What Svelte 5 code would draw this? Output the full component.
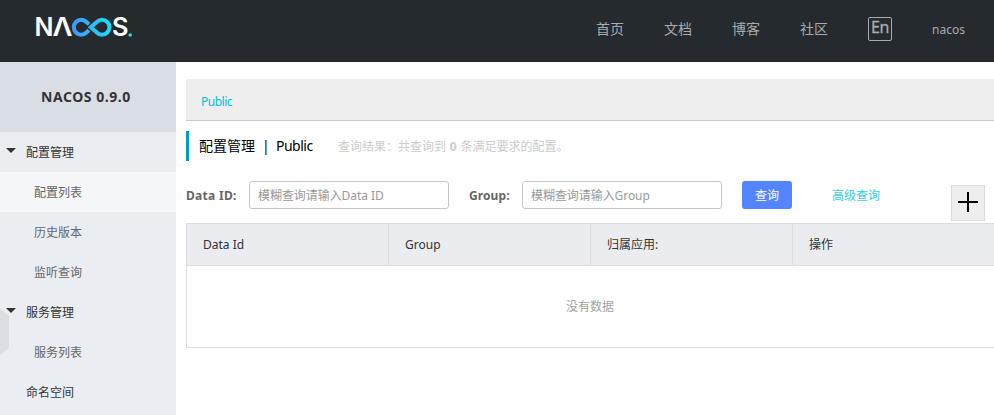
<script>
  const links = ['首页', '文档', '博客', '社区'];
  const menu = [
    { label: '配置管理', kind: 'group' },
    { label: '配置列表', kind: 'item', active: true },
    { label: '历史版本', kind: 'item' },
    { label: '监听查询', kind: 'item' },
    { label: '服务管理', kind: 'group' },
    { label: '服务列表', kind: 'item' },
    { label: '命名空间', kind: 'root' }
  ];
  const columns = ['Data Id', 'Group', '归属应用:', '操作'];
</script>

<div class="app">
  <header>
    <svg class="logo" width="98" height="22" viewBox="0 0 98 22" role="img" aria-label="NACOS">
      <defs>
        <linearGradient id="loop" gradientUnits="userSpaceOnUse" x1="36" y1="0" x2="77" y2="0">
          <stop offset="0" stop-color="#4590fa" />
          <stop offset="1" stop-color="#1be0f5" />
        </linearGradient>
      </defs>
      <g class="word">
        <text x="-0.5" y="19.4" textLength="19" lengthAdjust="spacingAndGlyphs">N</text>
        <text x="17.6" y="19.4" textLength="20" lengthAdjust="spacingAndGlyphs">Λ</text>
        <text x="77" y="19.2" textLength="16.5" lengthAdjust="spacingAndGlyphs">S</text>
      </g>
      <path d="M54 13.2 L51.4 15.5 A7.4 7.4 0 1 1 51.4 5 L54 7.4 M55.8 10.3 L61.8 5 A7.4 7.4 0 1 1 61.8 15.5 Z" fill="none" stroke="url(#loop)" stroke-width="4" />
      <circle cx="95.2" cy="18" r="1.8" fill="#1be0f5" />
    </svg>
    <nav>
      {#each links as link}<a href="#top">{link}</a>{/each}
      <span class="lang">En</span>
      <span class="user">nacos</span>
    </nav>
  </header>

  <div class="body">
    <aside>
      <div class="version">NACOS 0.9.0</div>
      {#each menu as entry}
        <div class="entry {entry.kind}" class:active={entry.active}>
          {#if entry.kind === 'group'}<i class="caret"></i>{/if}
          <span>{entry.label}</span>
        </div>
      {/each}
      <svg class="handle" width="9" height="46" viewBox="0 0 9 46"><path d="M0 0 L9 7 V39 L0 46 Z" fill="#d9dde4" /></svg>
    </aside>

    <main>
      <div class="namespace">Public</div>
      <div class="title">
        <span class="name">配置管理</span><span class="bar">|</span><span class="name latin">Public</span>
        <span class="result">查询结果：共查询到 <b>0</b> 条满足要求的配置。</span>
      </div>
      <div class="search">
        <label class="first" for="data-id">Data ID:</label>
        <input id="data-id" placeholder="模糊查询请输入Data ID" />
        <label class="second" for="group">Group:</label>
        <input id="group" placeholder="模糊查询请输入Group" />
        <button class="query">查询</button>
        <a class="advanced" href="#top">高级查询</a>
        <button class="add" aria-label="+">
          <svg width="20" height="20" viewBox="0 0 20 20"><path d="M10 0V20M0 10H20" stroke="#000" stroke-width="2" /></svg>
        </button>
      </div>
      <div class="table">
        <div class="head">
          {#each columns as column}<div class="cell">{column}</div>{/each}
        </div>
        <div class="empty">没有数据</div>
      </div>
    </main>
  </div>
</div>

<style>
  :global(body) { margin: 0; overflow: hidden; }
  .app {
    width: 994px; height: 415px; overflow: hidden; background: #fff; color: #333;
    font: 12px/18px "Noto Sans", "Noto Sans CJK SC", sans-serif;
  }
  .app *, .app { box-sizing: border-box; }
  a { text-decoration: none; }
  header { height: 62px; background: #252a2f; display: flex; justify-content: space-between; }
  .logo { margin: 17px 0 0 35px; overflow: visible; }
  .word { fill: #fff; font: 600 25px Inter, sans-serif; }
  nav { display: flex; align-items: flex-start; padding-right: 29px; color: #a9abad; }
  nav a { width: 28px; margin: 19px 40px 0 0; font-size: 14px; line-height: 20px; color: #a9abad; white-space: nowrap; }
  .lang { width: 24px; height: 24px; margin: 17px 40px 0 0; border: 1px solid #a9abad; border-radius: 2px; font-size: 16px; line-height: 19px; text-align: center; letter-spacing: -0.5px; -webkit-text-stroke: 0.3px #a9abad; }
  .user { width: 33px; margin-top: 20px; font-size: 12px; line-height: 20px; }
  .body { display: flex; height: 353px; }
  aside { position: relative; width: 176px; background: #eaedf1; flex: none; }
  .version { height: 70px; padding-left: 41px; background: #d9dde4; font-size: 14px; font-weight: 700; line-height: 70px; letter-spacing: 0.55px; white-space: nowrap; }
  .entry { height: 40px; padding-top: 2px; display: flex; align-items: center; color: #333; }
  .entry.root { padding-left: 26px; }
  .entry.item { padding-left: 34px; color: #666; }
  .entry.active { background: #f4f6f8; }
  .caret { margin: -5px 10px 0 6px; border: 5px solid transparent; border-top-color: #333; border-bottom: 0; }
  .handle { position: absolute; left: 0; top: 247px; }
  main { flex: 1; min-width: 0; padding: 17px 0 0 10px; }
  .namespace { height: 42px; padding: 14px 15px 0; background: #eee; border-bottom: 1px solid #ccc; color: #00c1de; letter-spacing: -0.5px; }
  .title { height: 30px; margin-top: 10px; padding-left: 10px; border-left: 3px solid #09c; display: flex; line-height: 30px; white-space: nowrap; }
  .name { font-size: 14px; color: #000; }
  .latin { width: 37px; letter-spacing: -0.5px; }
  .bar { margin: 0 7px; width: 7px; text-align: center; font-size: 14px; color: #000; }
  .result { margin-left: 25px; padding-top: 1px; color: #ccc; }
  .result b { margin: 0 0.7px; }
  .search { display: flex; height: 62px; padding-top: 20px; align-items: flex-start; }
  label { font-weight: 700; color: #666; line-height: 29px; white-space: nowrap; }
  .first { width: 63px; letter-spacing: 0.3px; }
  .second { width: 53px; margin-left: 20px; letter-spacing: 0.1px; }
  input { width: 200px; height: 28px; padding: 1px 8px 0; border: 1px solid #c4c6cf; border-radius: 3px; font: inherit; background: #fff; }
  input::placeholder { color: #999; opacity: 1; letter-spacing: -0.06px; }
  button { padding: 0; font: inherit; }
  .query { width: 50px; height: 28px; padding-top: 1px; margin-left: 20px; border: 0; border-radius: 3px; background: #5584ff; color: #fff; }
  .advanced { margin-left: 40px; line-height: 30px; color: #33cde5; }
  .add { width: 34px; height: 36px; margin: 4px 9px 0 auto; border: 1px solid #ddd; background: #eee; display: flex; align-items: center; justify-content: center; padding-bottom: 2px; }
  .table { border: 1px solid #dcdee3; border-right: 0; }
  .head { display: flex; height: 42px; background: #ebecf0; border-bottom: 1px solid #dcdee3; }
  .cell { width: 202px; flex: none; padding-left: 16px; border-right: 1px solid #dcdee3; line-height: 41px; }
  .cell:last-child { flex: 1; border-right: 0; }
  .empty { height: 81px; padding-right: 1px; line-height: 82px; text-align: center; color: #a0a2a8; }
</style>
